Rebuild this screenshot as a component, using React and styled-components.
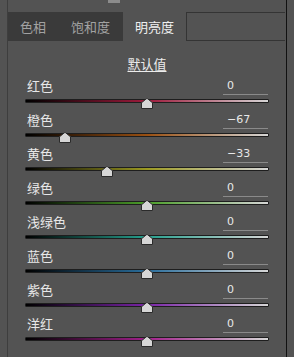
import React from "react";
import styled, { createGlobalStyle } from "styled-components";

const Global = createGlobalStyle`
  html, body { margin: 0; padding: 0; background: #535353; }
  body { font-family: "Noto Sans CJK SC", "Noto Sans", sans-serif; }
`;

const Screen = styled.div`
  width: 294px;
  height: 357px;
  padding-left: 7px;
  box-sizing: border-box;
  background: #535353;
  overflow: hidden;
`;

const Panel = styled.div`
  width: 280px;
  height: 357px;
  box-sizing: border-box;
  border-left: 1px solid #3e3e3e;
  border-right: 1px solid #111;
  background: #535353;
`;

const TopStrip = styled.div`
  height: 12px;
`;

const Nub = styled.div`
  margin-left: 100px;
  width: 12px;
  height: 3px;
  background: #8c8c8c;
`;

const TabBar = styled.div`
  display: flex;
  height: 29px;
`;

const Tab = styled.div`
  width: ${(p) => p.$w}px;
  flex: none;
  display: flex;
  align-items: center;
  justify-content: center;
  font-size: 13px;
  background: ${(p) => (p.$active ? "transparent" : "#3a3a3a")};
  color: ${(p) => (p.$active ? "#f0f0f0" : "#a2a2a2")};
`;

const TabFill = styled.div`
  flex: 1;
  box-sizing: border-box;
  border-top: 1px solid #343434;
  border-bottom: 1px solid #343434;
  border-left: 1px solid #343434;
  margin-right: 1px;
`;

const TitleBlock = styled.div`
  height: 37px;
  box-sizing: border-box;
  padding-top: 9px;
  text-align: center;
`;

const Title = styled.span`
  font-size: 13px;
  line-height: 16px;
  color: #ececec;
  text-decoration: underline;
  text-underline-offset: 2px;
  margin-left: 0px;
`;

const Row = styled.div`
  height: 34px;
`;

const Header = styled.div`
  display: flex;
  justify-content: space-between;
  align-items: flex-start;
  height: 18px;
  padding: 0 18px 0 19px;
`;

const Label = styled.span`
  font-size: 13px;
  line-height: 16px;
  color: #e8e8e8;
`;

const Value = styled.div`
  width: 45px;
  height: 17px;
  box-sizing: content-box;
  border-bottom: 1px solid #8a8a8a;
  padding-left: 4px;
  box-sizing: border-box;
  font-family: "DejaVu Sans", "Liberation Sans", sans-serif;
  font-size: 11px;
  line-height: 16px;
  color: #e8e8e8;
`;

const TrackWrap = styled.div`
  position: relative;
  margin: 3px 0 0 17px;
  width: 244px;
  height: 4px;
`;

const Track = styled.div`
  width: 100%;
  height: 4px;
  box-sizing: border-box;
  border: 1px solid #1e1e1e;
  border-radius: 1px;
  background: linear-gradient(to right, #000 0%, ${(p) => p.$c} 50%, #d6d6d6 100%);
`;

const ThumbSvg = styled.svg`
  position: absolute;
  top: -1px;
  width: 12px;
  height: 11px;
`;

const Thumb = ({ pct }) => (
  <ThumbSvg viewBox="0 0 12 11" style={{ left: `${pct * 244 - 6}px` }}>
    <path
      d="M0.5 10.5 V4.8 L5.3 0.8 Q6 0.3 6.7 0.8 L11.5 4.8 V10.5 Z"
      fill="#d6d6d6"
      stroke="#2a2a2a"
      strokeWidth="1"
    />
  </ThumbSvg>
);

const rows = [
  { label: "红色", value: 0, color: "#9e1b3c" },
  { label: "橙色", value: -67, color: "#9a5012" },
  { label: "黄色", value: -33, color: "#9c9a22" },
  { label: "绿色", value: 0, color: "#4c9e2a" },
  { label: "浅绿色", value: 0, color: "#26a08e" },
  { label: "蓝色", value: 0, color: "#2a6e9c" },
  { label: "紫色", value: 0, color: "#7a24a8" },
  { label: "洋红", value: 0, color: "#a2208c" },
];

const fmt = (v) => (v < 0 ? `\u2212${-v}` : `${v}`);

export default function App() {
  return (
    <>
      <Global />
      <Screen>
        <Panel>
          <TopStrip>
            <Nub />
          </TopStrip>
          <TabBar>
            <Tab $w={50}>色相</Tab>
            <Tab $w={65}>饱和度</Tab>
            <Tab $w={63} $active>
              明亮度
            </Tab>
            <TabFill />
          </TabBar>
          <TitleBlock>
            <Title>默认值</Title>
          </TitleBlock>
          {rows.map((r) => (
            <Row key={r.label}>
              <Header>
                <Label>{r.label}</Label>
                <Value>{fmt(r.value)}</Value>
              </Header>
              <TrackWrap>
                <Track $c={r.color} />
                <Thumb pct={(r.value + 100) / 200} />
              </TrackWrap>
            </Row>
          ))}
        </Panel>
      </Screen>
    </>
  );
}
